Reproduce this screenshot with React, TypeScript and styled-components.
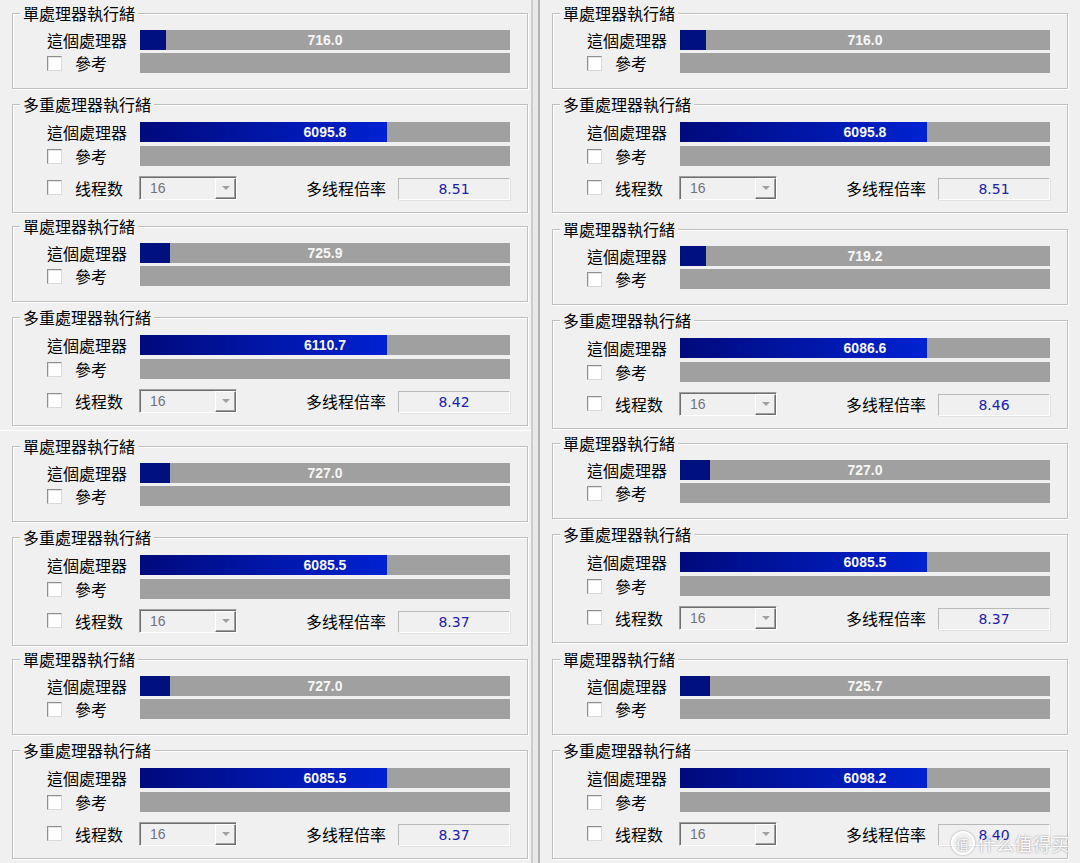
import React from 'react';
import styled, { createGlobalStyle } from 'styled-components';

const GlobalStyle = createGlobalStyle`
  html, body {
    margin: 0;
    padding: 0;
    background: #f0f0f0;
  }
`;

const CJK = `'Noto Sans CJK TC', 'Noto Sans CJK SC', sans-serif`;

interface IBench {
  single: string;
  singleFill: number;
  multi: string;
  multiFill: number;
  ratio: string;
}

interface IPanel {
  height: number;
  pad: number;
  seam?: boolean;
  data: IBench;
}

const leftPanels: IPanel[] = [
  { height: 213, pad: 13, data: { single: '716.0', singleFill: 26, multi: '6095.8', multiFill: 247, ratio: '8.51' } },
  { height: 217, pad: 13, data: { single: '725.9', singleFill: 30, multi: '6110.7', multiFill: 247, ratio: '8.42' } },
  { height: 216, pad: 15, seam: true, data: { single: '727.0', singleFill: 30, multi: '6085.5', multiFill: 247, ratio: '8.37' } },
  { height: 217, pad: 13, data: { single: '727.0', singleFill: 30, multi: '6085.5', multiFill: 247, ratio: '8.37' } },
];

const rightPanels: IPanel[] = [
  { height: 216, pad: 13, data: { single: '716.0', singleFill: 26, multi: '6095.8', multiFill: 247, ratio: '8.51' } },
  { height: 214, pad: 13, data: { single: '719.2', singleFill: 26, multi: '6086.6', multiFill: 247, ratio: '8.46' } },
  { height: 216, pad: 13, data: { single: '727.0', singleFill: 30, multi: '6085.5', multiFill: 247, ratio: '8.37' } },
  { height: 217, pad: 13, data: { single: '725.7', singleFill: 30, multi: '6098.2', multiFill: 247, ratio: '8.40' } },
];

const Page = styled.div`
  position: relative;
  display: flex;
  width: 1080px;
  height: 863px;
  background: #f0f0f0;
  font-family: ${CJK};
  overflow: hidden;
`;

const Column = styled.div<{ $w: number }>`
  width: ${(p) => p.$w}px;
  flex-shrink: 0;
  display: flex;
  flex-direction: column;
`;

const Divider = styled.div`
  width: 9px;
  flex-shrink: 0;
  box-sizing: border-box;
  border-left: 2px solid #cdcdcd;
  border-right: 2px solid #b3b3b3;
  background: #e9e9e9;
`;

const Panel = styled.section<{ $h: number; $pad: number; $seam?: boolean }>`
  height: ${(p) => p.$h}px;
  flex-shrink: 0;
  box-sizing: border-box;
  padding: ${(p) => p.$pad}px 0 0 12px;
  border-top: ${(p) => (p.$seam ? '1px solid #ffffff' : 'none')};
  display: flex;
  flex-direction: column;
  gap: 15px;
`;

const Group = styled.div<{ $multi?: boolean }>`
  position: relative;
  width: 516px;
  box-sizing: border-box;
  border: 1px solid #c0c0c0;
  box-shadow: inset 1px 1px 0 #ffffff, 1px 1px 0 #ffffff;
  padding: ${(p) => (p.$multi ? '17px 17px 13px 34px' : '16px 17px 15px 34px')};
  display: flex;
  flex-direction: column;
`;

const Title = styled.span`
  position: absolute;
  top: -10px;
  left: 7px;
  padding: 0 3px;
  background: #f0f0f0;
  font-size: 16px;
  line-height: 18px;
  color: #000;
  white-space: nowrap;
`;

const Row = styled.div<{ $mt?: number }>`
  display: grid;
  grid-template-columns: 93px 370px;
  align-items: center;
  height: 20px;
  margin-top: ${(p) => p.$mt ?? 0}px;
`;

const Label = styled.span`
  font-size: 16px;
  line-height: 18px;
  color: #000;
  white-space: nowrap;
`;

const CheckLabel = styled.span`
  display: flex;
  align-items: center;
  gap: 13px;
`;

const Check = styled.span`
  width: 13px;
  height: 13px;
  flex-shrink: 0;
  background: #ffffff;
  border-top: 1px solid #8e8e8e;
  border-left: 1px solid #8e8e8e;
  border-bottom: 1px solid #dadada;
  border-right: 1px solid #dadada;
  box-shadow: inset 1px 1px 0 #e4e4e4;
`;

const Bar = styled.div`
  display: grid;
  height: 20px;
  background: #a0a0a0;
`;

const Fill = styled.div<{ $multi?: boolean }>`
  grid-area: 1 / 1;
  height: 100%;
  background: ${(p) => (p.$multi ? 'linear-gradient(to right, #000a7c, #0022d2)' : '#00107f')};
`;

const Score = styled.span`
  grid-area: 1 / 1;
  align-self: center;
  justify-self: center;
  font: bold 14px 'Liberation Sans', Arial, sans-serif;
  color: #f6f6f6;
  line-height: 16px;
`;

const ThreadRow = styled.div`
  display: grid;
  grid-template-columns: 92px 98px 1fr 112px;
  align-items: center;
  height: 24px;
  margin-top: 9px;
`;

const Combo = styled.div`
  display: flex;
  height: 24px;
  box-sizing: border-box;
  border: 1px solid;
  border-color: #a0a0a0 #ffffff #ffffff #a0a0a0;
  box-shadow: inset 1px 1px 0 #6e6e6e;
  background: #f0f0f0;
`;

const ComboText = styled.span`
  flex: 1;
  padding-left: 10px;
  font: 14px 'Liberation Sans', Arial, sans-serif;
  line-height: 22px;
  color: #72727e;
`;

const ComboButton = styled.span`
  width: 21px;
  margin: 1px 0 0 0;
  box-sizing: border-box;
  border: 1px solid;
  border-color: #ffffff #6e6e6e #6e6e6e #ffffff;
  box-shadow: inset -1px -1px 0 #a0a0a0;
  display: flex;
  align-items: center;
  justify-content: center;
`;

const Arrow = styled.span`
  width: 0;
  height: 0;
  border-left: 4px solid transparent;
  border-right: 4px solid transparent;
  border-top: 4px solid #a0a0a0;
`;

const RatioLabel = styled(Label)`
  justify-self: end;
  padding-right: 12px;
`;

const RatioBox = styled.div`
  align-self: start;
  margin-top: 3px;
  height: 22px;
  box-sizing: border-box;
  border: 1px solid;
  border-color: #b9b9b9 #ffffff #ffffff #b9b9b9;
  box-shadow: 1px 1px 0 #e2e2e2;
  display: flex;
  align-items: center;
  justify-content: center;
  font: 14px 'DejaVu Sans', Verdana, sans-serif;
  color: #2020ac;
`;

const Watermark = styled.div`
  position: absolute;
  right: 10px;
  bottom: 8px;
  display: flex;
  align-items: center;
  gap: 3px;
  color: rgba(255, 255, 255, 0.95);
  text-shadow: 0 0 2px rgba(0, 0, 0, 0.45);
  pointer-events: none;
`;

const MarkBadge = styled.span`
  width: 20px;
  height: 20px;
  border-radius: 50%;
  border: 2px solid rgba(255, 255, 255, 0.95);
  box-shadow: 0 0 2px rgba(0, 0, 0, 0.45);
  display: flex;
  align-items: center;
  justify-content: center;
  font-size: 13px;
  line-height: 1;
`;

const MarkText = styled.span`
  font-family: 'Noto Sans CJK SC', sans-serif;
  font-size: 18px;
  line-height: 20px;
  letter-spacing: 0.5px;
`;

const BenchPanel: React.FC<{ panel: IPanel }> = ({ panel: { height, pad, seam, data } }) => (
  <Panel $h={height} $pad={pad} $seam={seam}>
    <Group>
      <Title>單處理器執行緒</Title>
      <Row>
        <Label>這個處理器</Label>
        <Bar>
          <Fill style={{ width: data.singleFill }} />
          <Score>{data.single}</Score>
        </Bar>
      </Row>
      <Row $mt={3}>
        <CheckLabel>
          <Check />
          <Label>參考</Label>
        </CheckLabel>
        <Bar />
      </Row>
    </Group>
    <Group $multi>
      <Title>多重處理器執行緒</Title>
      <Row>
        <Label>這個處理器</Label>
        <Bar>
          <Fill $multi style={{ width: data.multiFill }} />
          <Score>{data.multi}</Score>
        </Bar>
      </Row>
      <Row $mt={4}>
        <CheckLabel>
          <Check />
          <Label>參考</Label>
        </CheckLabel>
        <Bar />
      </Row>
      <ThreadRow>
        <CheckLabel>
          <Check />
          <Label>线程数</Label>
        </CheckLabel>
        <Combo>
          <ComboText>16</ComboText>
          <ComboButton>
            <Arrow />
          </ComboButton>
        </Combo>
        <RatioLabel>多线程倍率</RatioLabel>
        <RatioBox>{data.ratio}</RatioBox>
      </ThreadRow>
    </Group>
  </Panel>
);

export default function App() {
  return (
    <>
      <GlobalStyle />
      <Page>
        <Column $w={531}>
          {leftPanels.map((p, i) => (
            <BenchPanel key={i} panel={p} />
          ))}
        </Column>
        <Divider />
        <Column $w={540}>
          {rightPanels.map((p, i) => (
            <BenchPanel key={i} panel={p} />
          ))}
        </Column>
        <Watermark>
          <MarkBadge>值</MarkBadge>
          <MarkText>什么值得买</MarkText>
        </Watermark>
      </Page>
    </>
  );
}
